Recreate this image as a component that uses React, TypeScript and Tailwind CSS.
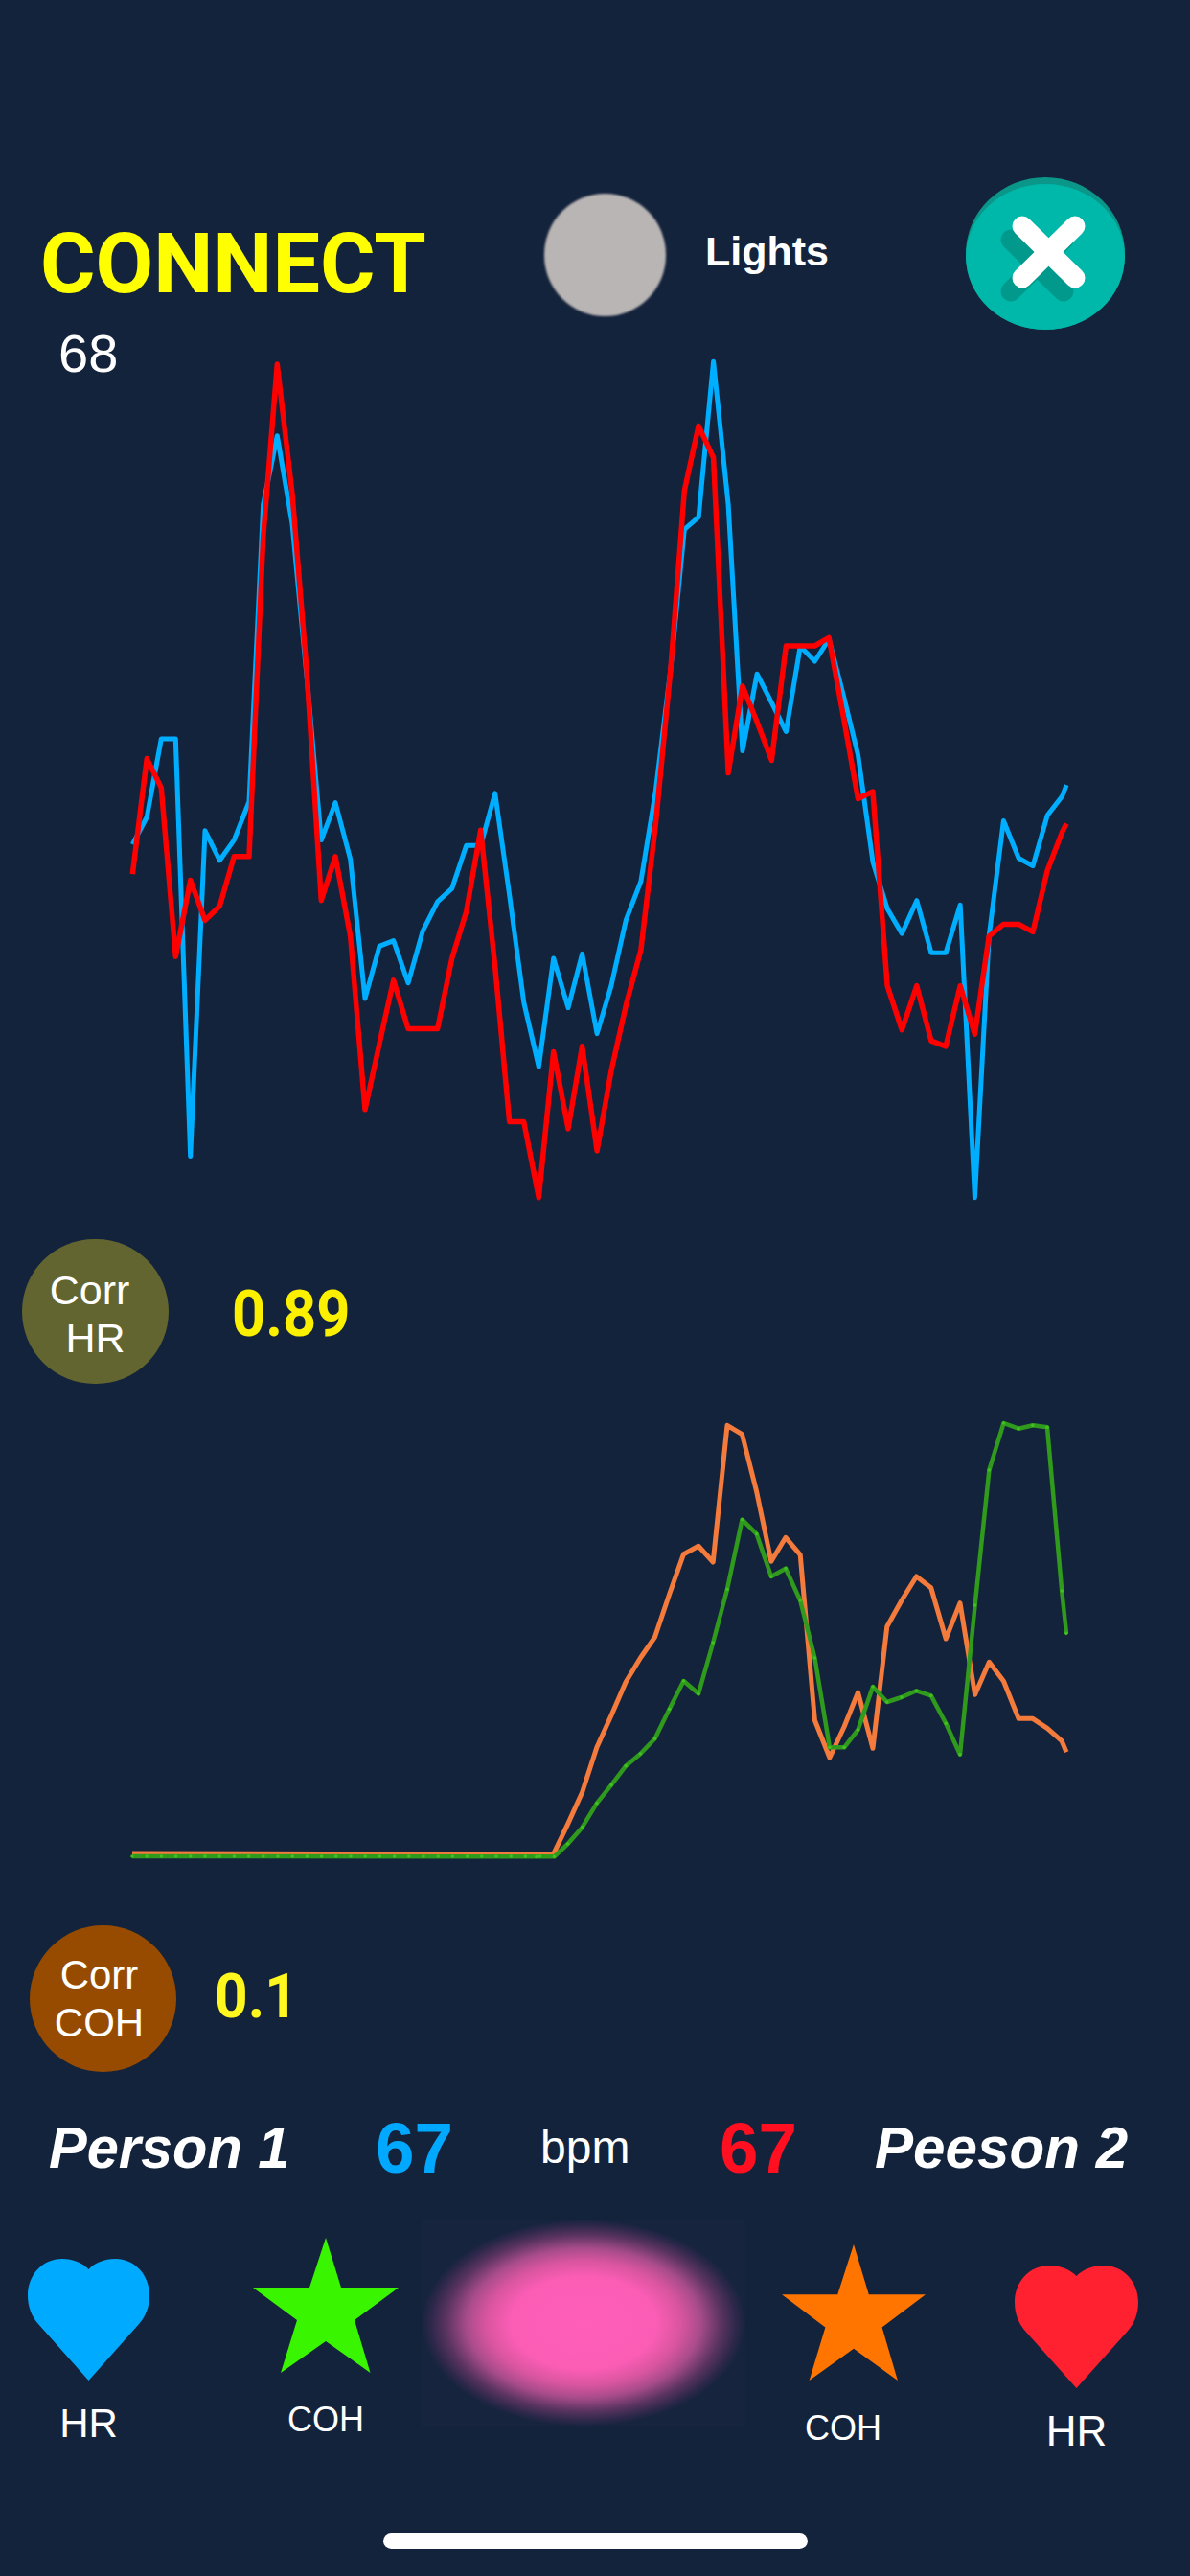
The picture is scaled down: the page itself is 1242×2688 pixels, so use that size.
const toPts = (pts: number[][], ox: number, sx: number, oy: number, sy: number) =>
  pts.map(([x, y]) => `${(ox + x * sx).toFixed(1)},${(oy + y * sy).toFixed(1)}`).join(" ");

const join = (...parts: string[]) => parts.join(" ");

const blueA = [[115,908],[160,858],[205,716],[250,716],[296,1475],[342,883],[388,937],[433,900],[480,830],[524,290],[568,165],[615,325],[660,600],[706,900],[750,832],[797,935],[843,1188],[888,1093],[932,1083],[978,1160],[1024,1065],[1070,1012],[1115,988],[1160,910],[1205,910],[1250,815],[1295,1000],[1340,1195],[1387,1312],[1433,1115],[1479,1205]];
const blueB = [[22,1107],[67,1252],[110,1165],[155,1045],[200,975],[245,810],[290,590],[332,335],[375,313],[420,30],[465,290],[508,738],[552,598],[596,650],[640,703],[683,548],[727,575],[770,535],[815,640],[858,745],[903,940],[947,1025],[991,1070],[1036,1010],[1080,1105],[1124,1105],[1168,1018],[1212,1550],[1255,1075],[1299,865],[1345,933],[1388,947],[1432,855],[1477,820],[1490,800]];
const redA = [[115,962],[160,752],[205,805],[250,1112],[296,973],[342,1046],[388,1020],[433,930],[480,930],[524,350],[568,35],[615,270],[660,590],[706,1010],[750,930],[797,1075],[843,1390],[888,1270],[932,1155],[978,1243],[1024,1243],[1070,1243],[1115,1115],[1160,1030],[1205,882],[1250,1130],[1295,1412],[1340,1412],[1387,1550],[1433,1285],[1479,1425]];
const redB = [[22,1275],[67,1465],[110,1320],[155,1200],[200,1100],[245,870],[290,590],[332,265],[375,147],[420,205],[465,778],[508,620],[552,685],[596,755],[640,547],[683,547],[727,547],[770,532],[815,680],[858,825],[903,812],[947,1165],[991,1245],[1036,1165],[1080,1265],[1124,1275],[1168,1165],[1212,1253],[1255,1075],[1299,1053],[1345,1053],[1388,1067],[1432,955],[1477,885],[1490,870]];

const SA = 1 / 3, SB = 540 / 1568, SY = 900 / 1568;
const bluePts = join(toPts(blueA, 100, SA, 360, SY), toPts(blueB, 600, SB, 360, SY));
const redPts = join(toPts(redA, 100, SA, 360, SY), toPts(redB, 600, SB, 360, SY));

const orange = [[0,1425],[47,1425],[88,1330],[129,1230],[170,1090],[211,990],[252,885],[293,810],[334,745],[375,610],[415,485],[457,460],[498,510],[538,82],[580,110],[621,290],[662,508],[703,433],[744,487],[785,1005],[827,1122],[868,1025],[907,918],[949,1093],[989,712],[1030,630],[1072,555],[1113,590],[1155,750],[1195,638],[1237,925],[1277,823],[1318,883],[1360,1000],[1400,1000],[1441,1030],[1482,1070],[1495,1105]];
const green = [[0,1432],[50,1432],[88,1392],[129,1340],[170,1265],[211,1208],[252,1148],[293,1110],[334,1063],[375,970],[415,882],[457,922],[498,762],[538,595],[580,377],[621,422],[662,555],[703,530],[744,630],[785,810],[827,1090],[868,1090],[907,1035],[949,900],[989,948],[1030,933],[1072,913],[1113,928],[1155,1015],[1195,1112],[1237,645],[1277,222],[1318,75],[1360,92],[1400,82],[1441,88],[1482,600],[1495,733]];
const SX2 = 580 / 1568;
const orangePts = `138,1934 ` + toPts(orange, 560, SX2, 1460, 1 / 3);
const greenReal = green.map(([x, y]) => [560 + x * SX2, 1460 + y / 3]);
const flatDots = Array.from({ length: 29 }, (_, i) => [138 + i * 15.2, 1937]);
const greenPts = `138,1937 ` + greenReal.map(([x, y]) => `${x.toFixed(1)},${y.toFixed(1)}`).join(" ");

function Heart({ fill, className }: { fill: string; className: string }) {
  return (
    <svg viewBox="0 0 127 127" className={className} preserveAspectRatio="none">
      <path
        d="M63.5 11C57 4 47 0 36 0C15 0 0 17 0 38C0 50 4 60 11 68L63.5 127L116 68C123 60 127 50 127 38C127 17 112 0 91 0C80 0 70 4 63.5 11Z"
        fill={fill}
      />
    </svg>
  );
}

function Star({ fill, className }: { fill: string; className: string }) {
  return (
    <svg viewBox="0 0 152 141" className={className} preserveAspectRatio="none">
      <polygon
        points="76,0 92,52 152,52 106,86 122.5,141 76,108 29,141 46,86 0,52 59,52"
        fill={fill}
      />
    </svg>
  );
}

export default function App() {
  const sans = "font-['Liberation_Sans',Arial,sans-serif]";
  const roboto = "font-['Roboto',sans-serif]";
  return (
    <div className={`flex h-[2688px] w-[1242px] flex-col overflow-hidden bg-[#14233c] pt-[185px] text-white ${sans}`}>
      {/* Header */}
      <div className="flex h-[159px] items-start">
        <span className="ml-[42px] mt-[46px] w-[526px] font-['Roboto',sans-serif] text-[88px] font-bold leading-[88px] text-[#ffff00]">
          CONNECT
        </span>
        <div className="mt-[17px] h-[128px] w-[127px] rounded-full bg-[#b9b5b4] blur-[1px]" />
        <span className="ml-[41px] mt-[53px] w-[272px] text-[43px] font-bold leading-[48px]">Lights</span>
        <svg viewBox="0 0 166 159" className="h-[159px] w-[166px]">
          <ellipse cx="83" cy="79.5" rx="83" ry="79.5" fill="#0a9688" />
          <ellipse cx="83" cy="83" rx="83" ry="76" fill="#00b8a9" />
          <g stroke="#00998b" strokeWidth="21" strokeLinecap="round" transform="translate(-12 14)">
            <line x1="59" y1="51" x2="114" y2="105" />
            <line x1="114" y1="51" x2="59" y2="105" />
          </g>
          <g stroke="#ffffff" strokeWidth="21" strokeLinecap="round">
            <line x1="59" y1="51" x2="114" y2="105" />
            <line x1="114" y1="51" x2="59" y2="105" />
          </g>
        </svg>
      </div>

      {/* Heart-rate chart */}
      <div className="flex items-start">
        <div className="-mt-[3px] w-[130px] pl-[61px] text-[56px] leading-[56px]">68</div>
        <svg viewBox="130 360 1000 900" className="mt-[16px] h-[900px] w-[1000px]">
          <polyline points={bluePts} fill="none" stroke="#00aeff" strokeWidth="5" strokeLinejoin="round" />
          <polyline points={redPts} fill="none" stroke="#ff0000" strokeWidth="5.5" strokeLinejoin="round" />
        </svg>
      </div>

      {/* Corr HR */}
      <div className="mt-[33px] flex h-[151px] items-center pl-[23px]">
        <div className="flex h-[151px] w-[153px] flex-col items-center justify-center rounded-full bg-[#62652f] pt-[4px] text-[43px] leading-[50px]">
          <span className="mr-[12px]">Corr</span>
          <span>HR</span>
        </div>
        <span className={`ml-[66px] mt-[6px] origin-left scale-x-[0.93] ${roboto} text-[66px] font-bold leading-none text-[#fbf000]`}>0.89</span>
      </div>

      {/* Coherence chart */}
      <svg viewBox="130 1460 1000 500" className="ml-[130px] mt-[16px] h-[500px] w-[1000px] shrink-0">
        <polyline points={orangePts} fill="none" stroke="#f47b3c" strokeWidth="5" strokeLinejoin="round" />
        <polyline points={greenPts} fill="none" stroke="#2f9a1c" strokeWidth="4.5" strokeLinejoin="round" />
        {flatDots.concat(greenReal).map(([x, y], i) => (
          <circle key={i} cx={x} cy={y} r="1.8" fill="#3fc21f" />
        ))}
      </svg>

      {/* Corr COH */}
      <div className="mt-[49px] flex h-[153px] items-center pl-[31px]">
        <div className="flex h-[153px] w-[153px] flex-col items-center justify-center rounded-full bg-[#964b00] text-[42px] leading-[50px]">
          <span className="mr-[8px]">Corr</span>
          <span className="mr-[8px]">COH</span>
        </div>
        <span className={`ml-[40px] -mt-[4px] origin-left scale-x-[0.93] ${roboto} text-[65px] font-bold leading-none text-[#fff71e]`}>0.1</span>
      </div>

      {/* Person row */}
      <div className="mt-[47px] flex h-[64px] items-center">
        <span className="ml-[51px] w-[341px] origin-left scale-x-[0.96] text-[62px] font-bold italic leading-none">Person 1</span>
        <span className="w-[172px] origin-left scale-x-[0.97] text-[75px] font-bold leading-none text-[#00a8ff]">67</span>
        <span className="w-[187px] text-[48px] leading-none">bpm</span>
        <span className="w-[162px] origin-left scale-x-[0.97] text-[75px] font-bold leading-none text-[#ff0f1f]">67</span>
        <span className="origin-left scale-x-[0.97] text-[62px] font-bold italic leading-none whitespace-nowrap">Peeson 2</span>
      </div>

      {/* Icons */}
      <div className="mt-[43px] flex h-[234px] items-start">
        <div className="ml-[29px] mt-[41px] flex w-[127px] flex-col items-center">
          <Heart fill="#00aaff" className="h-[127px] w-[127px]" />
          <span className="mt-[21px] text-[42px] leading-[48px]">HR</span>
        </div>
        <div className="ml-[108px] mt-[19px] flex w-[152px] flex-col items-center">
          <Star fill="#39f500" className="h-[141px] w-[152px]" />
          <span className="mt-[29px] text-[36px] leading-[40px]">COH</span>
        </div>
        <div className="ml-[24px] h-[216px] w-[338px] bg-[radial-gradient(ellipse_closest-side,#ff5fb8_0%,#fb5db5_45%,#d9559f_60%,#a94c8b_72%,#5a3460_85%,#2f284c_94%,#16243e_100%)]" />
        <div className="ml-[38px] mt-[26px] flex w-[150px] flex-col items-center">
          <Star fill="#ff7500" className="h-[142px] w-[150px]" />
          <span className="mr-[22px] mt-[30px] text-[36px] leading-[40px]">COH</span>
        </div>
        <div className="ml-[93px] mt-[48px] flex w-[129px] flex-col items-center">
          <Heart fill="#ff2030" className="h-[128px] w-[129px]" />
          <span className="mt-[20px] text-[44px] leading-[50px]">HR</span>
        </div>
      </div>

      {/* Home indicator */}
      <div className="ml-[400px] mt-[93px] h-[17px] w-[443px] rounded-full bg-white" />
    </div>
  );
}
